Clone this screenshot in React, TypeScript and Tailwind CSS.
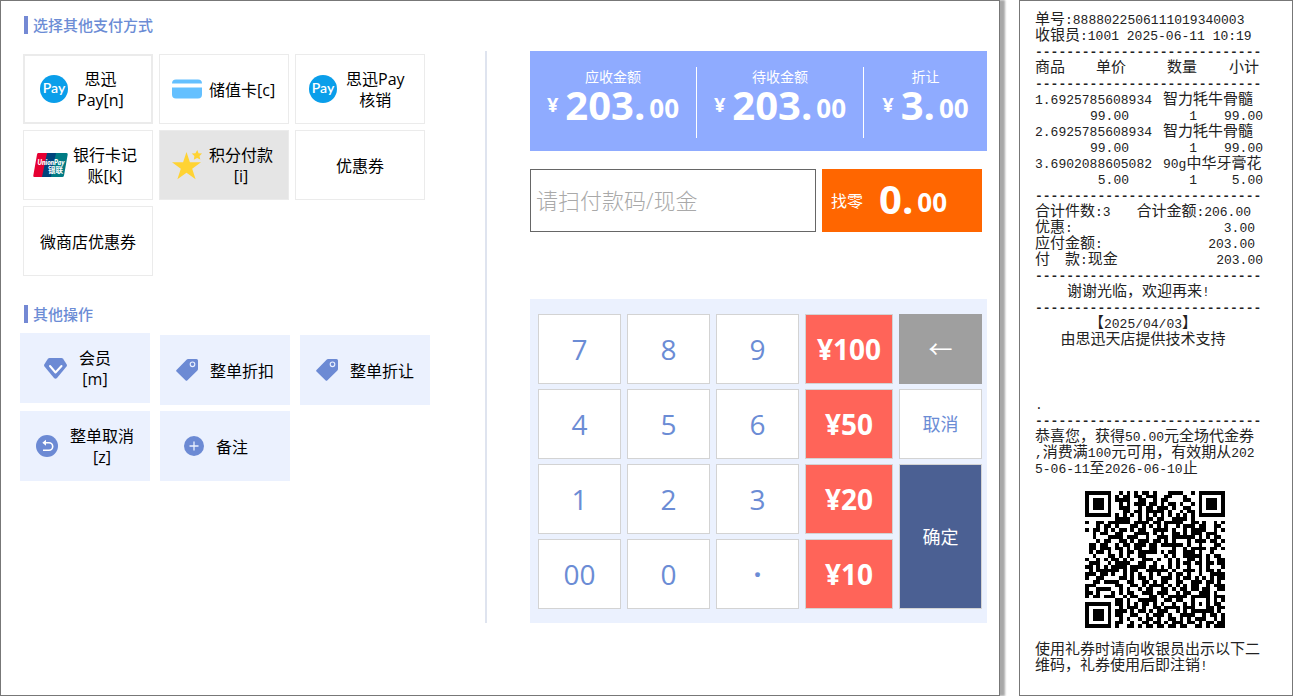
import React, { useState } from "react";

const QR_ROWS = [
  "#######..#.#.#.##.#...####..#.#######",
  "#.....#.#.##.##.###..##...#...#.....#",
  "#.###.#.####..##..#.##....##..#.###.#",
  "#.###.#..#.#.###.##.#.##.#..#.#.###.#",
  "#.###.#..###..#.##.###.#..##..#.###.#",
  "#.....#...##.##.#####.#..#.##.#.....#",
  "#######.#.#.#.#.#.#.#.#.#.#.#.#######",
  "........####..#.##.##..####.#........",
  "#..##.######.####.##.#####..##.#..#.#",
  "...#.##.#...##.#.#.#.#..#.###.##..##.",
  "#.##.#.#.##.#.##..####.#..#.####..#.#",
  "..#.##..##...####.#.#..##.#.###.###..",
  "..#...####.###..#..###.######.#.#.##.",
  "...#.##..##.#.###.##.#.#...#.###.##.#",
  ".##.##..#.##.###.##.######.#..#...##.",
  ".##.###.##.#.##..##....#..#.####.##.#",
  ".#.##.#..#.##.#####.#.##..###.#..#...",
  "..#...##.#.#..##.....#.#..#####.#.##.",
  "#..#.#.##.#.#..###.#..#.#..##.#.#..##",
  ".###..#.####..##..#...#.#.##.##.##.##",
  "##.#.#.####.####.##.#.#.#..#..#.#...#",
  ".#.######.#.##..######.#..###.#.##.#.",
  "###.##.#..#.#.#..#.#..#.##.#..#..####",
  "#..##....##.#.##.#..###.#.##.#.#.#.##",
  "..##.####..##..##.#.##..##..###.##.#.",
  "###.....##..##.#.####.#.#.#.##..#.###",
  "#..####..#.#..#.##..##.#.##.##.##..##",
  "##.#...#.#.##..###.###..#.##..###.#..",
  "#.##.###..#.##...##.#.#####.#####.###",
  "........##.#..#####..##.##..#...#.#.#",
  "#######.##.#.#.##.#.#..#..#.#.#.#.##.",
  "#.....#..#.###.#..##.####.###...##.##",
  "#.###.#.###.#.##.#.###..#.#.######.#.",
  "#.###.#.##..##..#.###.#..####..#.##.#",
  "#.###.#..#.#..#.##.#..##.#.#.###..#.#",
  "#.....#.##..#..##.##.#.###.##.#.##.##",
  "#######.#..##.#.##.##.##.##..##.#.###",
];

const QrCode = () => (
  <svg
    className="mx-auto h-[137px] w-[140px]"
    viewBox="0 0 37 37"
    preserveAspectRatio="none"
    shapeRendering="crispEdges"
    role="img"
    aria-label="二维码"
  >
    <path
      fill="#000"
      d={QR_ROWS.map((row, y) =>
        [...row].map((c, x) => (c === "#" ? `M${x} ${y}h1v1h-1z` : "")).join("")
      ).join("")}
    />
  </svg>
);

const PayIcon = () => (
  <svg className="size-7 shrink-0" viewBox="0 0 28 28" aria-hidden="true">
    <circle cx="14" cy="14" r="14" fill="#0a9eea" />
    <text x="14" y="18" textAnchor="middle" fill="#fff" fontFamily="Lato, sans-serif" fontWeight="600" fontSize="14">
      Pay
    </text>
  </svg>
);

const CardIcon = () => (
  <svg className="h-5 w-[30px] shrink-0" viewBox="0 0 30 20" aria-hidden="true">
    <path fill="#64c0ff" d="M4 .5h22a4 4 0 0 1 4 4H0a4 4 0 0 1 4-4zM0 8.500h30v7a4 4 0 0 1-4 4H4a4 4 0 0 1-4-4z" />
  </svg>
);

const UnionPayIcon = () => (
  <svg className="h-6 w-[35px] shrink-0" viewBox="0 0 35 24" aria-hidden="true">
    <path fill="#e60032" d="M5 0h10l-5 24H1.500Q0 24 .3 22.500L4 1.500Q4.300 0 5 0z" />
    <path fill="#00447c" d="M14 0h10l-5 24H9z" />
    <path fill="#007b84" d="M23 0h10.500q1.500 0 1.200 1.500L31 22.500q-.3 1.500-1.800 1.500H18z" />
    <text x="18" y="11.500" textAnchor="middle" fill="#fff" fontFamily="Lato, sans-serif" fontStyle="italic" fontWeight="800" fontSize="6.500">
      UnionPay
    </text>
    <text x="22.500" y="20" textAnchor="middle" fill="#fff" fontFamily="Noto Sans CJK SC, sans-serif" fontWeight="700" fontSize="7.500">
      银联
    </text>
  </svg>
);

const StarIcon = () => (
  <svg className="size-[30px] shrink-0" viewBox="0 0 30 30" aria-hidden="true">
    <path fill="#ffd333" d="M14.500 2l3.400 10.300H29l-8.800 6.500 3.400 10.400-9.100-6.400-9.100 6.400 3.400-10.400L0 12.300h11.100z" />
    <path fill="#ffd333" d="M25.300 0l1.200 3.300 3.500.3-2.500 2.300.8 3.700-3.200-1.700-3.300 1.800.6-3.600L19.700 3.400l3.700-.1z" />
  </svg>
);

const DiamondIcon = () => (
  <svg className="h-[21px] w-[23px] shrink-0" viewBox="0 0 23 21" aria-hidden="true">
    <path fill="#6c8ad4" d="M5.500 0h12q1 0 1.600.8l3.500 5.500q.7 1.200-.1 2.200L13 20q-1.500 1.600-3 0L.5 8.500q-.8-1-.1-2.200L3.900.8Q4.500 0 5.500 0z" />
    <path fill="none" stroke="#fff" strokeWidth="2" strokeLinecap="round" strokeLinejoin="round" d="M6 8l5.500 6.500L17.500 8" />
  </svg>
);

const TagIcon = () => (
  <svg className="size-[22px] shrink-0" viewBox="0 0 22 22" aria-hidden="true">
    <path fill="#6c8ad4" d="M12 0h8.500q1.500 0 1.500 1.500V10q0 .8-.6 1.400L11.200 21.500q-.8.7-1.500 0L.5 12.500q-.8-.7 0-1.500L10.800.5q.5-.5 1.200-.5z" />
    <circle cx="16.500" cy="5.300" r="2.300" fill="none" stroke="#ebf1fe" strokeWidth="1.100" />
  </svg>
);

const UndoIcon = () => (
  <svg className="size-[22px] shrink-0" viewBox="0 0 22 22" aria-hidden="true">
    <circle cx="11" cy="11" r="11" fill="#6c8ad4" />
    <path fill="none" stroke="#fff" strokeWidth="1.600" d="M8 7.800h5a3.700 3.700 0 0 1 0 7.400H7" />
    <path fill="#fff" d="M6.300 7.800L10 4.800v6z" />
  </svg>
);

const PlusIcon = () => (
  <svg className="size-5 shrink-0" viewBox="0 0 20 20" aria-hidden="true">
    <circle cx="10" cy="10" r="10" fill="#6c8ad4" />
    <path stroke="#ebf1fe" strokeWidth="1.300" d="M5.500 10h9M10 5.500v9" />
  </svg>
);

type Tile = { lines: string[]; icon?: React.ReactNode; layout: string };

const payMethods: Tile[] = [
  { lines: ["思迅", "Pay[n]"], icon: <PayIcon />, layout: "border-2 border-[#ebebeb] pl-[15px] gap-[9px]" },
  { lines: ["储值卡[c]"], icon: <CardIcon />, layout: "border border-[#ebebeb] pl-3 gap-[7px]" },
  { lines: ["思迅Pay", "核销"], icon: <PayIcon />, layout: "border border-[#ebebeb] pl-[13px] gap-[9px]" },
  { lines: ["银行卡记", "账[k]"], icon: <UnionPayIcon />, layout: "border border-[#ebebeb] pl-[9px] gap-[5px]" },
  { lines: ["积分付款", "[i]"], icon: <StarIcon />, layout: "border border-[#ebebeb] bg-[#e5e5e5] pl-3 gap-[7px]" },
  { lines: ["优惠券"], layout: "border border-[#ebebeb] justify-center" },
  { lines: ["微商店优惠券"], layout: "border border-[#ebebeb] justify-center" },
];

const operations: Tile[] = [
  { lines: ["会员", "[m]"], icon: <DiamondIcon />, layout: "self-start pl-6" },
  { lines: ["整单折扣"], icon: <TagIcon />, layout: "self-end pl-4" },
  { lines: ["整单折让"], icon: <TagIcon />, layout: "self-end pl-4" },
  { lines: ["整单取消", "[z]"], icon: <UndoIcon />, layout: "pl-4" },
  { lines: ["备注"], icon: <PlusIcon />, layout: "pl-6" },
];

const Label = ({ lines }: { lines: string[] }) => (
  <span className="pt-0.5 text-center text-base leading-[21px] whitespace-nowrap text-black">
    {lines.map((l) => (
      <span key={l} className="block">
        {l}
      </span>
    ))}
  </span>
);

const Heading = ({ children }: { children: React.ReactNode }) => (
  <h2 className="ml-[23px] flex h-[18px] items-center border-l-4 border-[#7489d4] pl-[5px] text-[15px] leading-[18px] font-medium text-[#6b8cd5]">
    {children}
  </h2>
);

const Amount = ({ whole }: { whole: string }) => (
  <>
    <span className="text-[40px]">{whole}</span>
    <span className="ml-1 align-[2px] text-[26px]">00</span>
  </>
);

const Total = ({ label, whole }: { label: string; whole: string }) => (
  <div className="text-center whitespace-nowrap">
    <div className="text-sm leading-5">{label}</div>
    <div className="leading-[36px] font-bold">
      <span className="mr-[7px] align-[8px] text-xl leading-5">¥</span>
      <Amount whole={whole} />
    </div>
  </div>
);

const keyBase = "flex items-center justify-center border border-[#d3d3d3]";

const DigitKey = ({ value, onPress }: { value: string; onPress: (v: string) => void }) => (
  <button className={`${keyBase} bg-white text-[28px] text-[#6b8cd5]`} onClick={() => onPress(value)}>
    {value === "." ? <span className="font-bold">·</span> : value}
  </button>
);

const CashKey = ({ value, onPress }: { value: string; onPress: (v: string) => void }) => (
  <button className={`${keyBase} bg-[#ff6459] text-[28px] font-bold text-white`} onClick={() => onPress(value)}>
    ¥{value}
  </button>
);

/* Printer text: full-width characters are set one size above the half-width ones. */
const Print = ({ children }: { children: string }) => (
  <>
    {children.split(/([^\x00-\xff]+)/).map((part, i) =>
      i % 2 ? (
        <span key={i} className="text-[15px]">
          {part}
        </span>
      ) : (
        part
      )
    )}
  </>
);

const Rule = () => (
  <div className="h-4 font-bold" aria-hidden="true">
    -----------------------------
  </div>
);

const items = [
  { code: "1.6925785608934", name: "智力牦牛骨髓", price: "99.00", qty: "1", sum: "99.00" },
  { code: "2.6925785608934", name: "智力牦牛骨髓", price: "99.00", qty: "1", sum: "99.00" },
  { code: "3.6902088605082", name: "90g中华牙膏花", price: "5.00", qty: "1", sum: "5.00" },
];

const Row = ({ label, value, pad }: { label: string; value: string; pad: string }) => (
  <div className={`flex h-4 justify-between ${pad}`}>
    <span>
      <Print>{label}</Print>
    </span>
    <span>
      <Print>{value}</Print>
    </span>
  </div>
);

const Receipt = () => (
  <aside className="w-[274px] shrink-0 border border-[#777] bg-white pt-3 pl-[15px] font-['Liberation_Mono','Noto_Sans_CJK_SC',monospace] text-[13px] leading-4 text-[#222]">
    <div className="w-[228px] whitespace-pre">
      <div className="h-4"><Print>单号:8888022506111019340003</Print></div>
      <div className="h-4"><Print>收银员:1001 2025-06-11 10:19</Print></div>
      <Rule />
      <table className="w-full table-fixed border-collapse">
        <colgroup>
          <col className="w-[61px]" />
          <col className="w-[33px]" />
          <col className="w-[34px]" />
          <col className="w-[34px]" />
          <col />
        </colgroup>
        <thead>
          <tr className="h-4 text-left">
            <th className="p-0 font-normal"><Print>商品</Print></th>
            <th className="p-0 font-normal"><Print>单价</Print></th>
            <th className="p-0 text-right font-normal" colSpan={2}><Print>数量</Print></th>
            <th className="p-0 pr-1 text-right font-normal"><Print>小计</Print></th>
          </tr>
          <tr>
            <td className="p-0" colSpan={5}><Rule /></td>
          </tr>
        </thead>
        {items.map((it) => (
          <tbody key={it.code}>
            <tr>
              <td className="h-4 p-0" colSpan={3}>{it.code}</td>
              <td className="p-0" colSpan={2}>
                <div className="h-4"><Print>{it.name}</Print></div>
              </td>
            </tr>
            <tr className="h-4 text-right">
              <td className="p-0" />
              <td className="p-0">
                <div className="flex justify-end">{it.price}</div>
              </td>
              <td className="p-0" colSpan={2}>{it.qty}</td>
              <td className="p-0">{it.sum}</td>
            </tr>
          </tbody>
        ))}
      </table>
      <Rule />
      <Row label="合计件数:3" value="合计金额:206.00" pad="pr-3" />
      <Row label="优惠:" value="3.00" pad="pr-2" />
      <Row label="应付金额:" value="203.00" pad="pr-2" />
      <Row label={"付\u3000款:现金"} value="203.00" pad="pr-0" />
      <Rule />
      <div className="h-4 pl-8"><Print>谢谢光临，欢迎再来!</Print></div>
      <Rule />
      <div className="flex h-4 justify-center pr-3"><span><Print>【2025/04/03】</Print></span></div>
      <div className="flex h-4 justify-center pr-3"><span><Print>由思迅天店提供技术支持</Print></span></div>
      <div className="mt-[49px] h-4">.</div>
      <Rule />
      <div className="h-4"><Print>恭喜您，获得50.00元全场代金券</Print></div>
      <div className="h-4"><Print>,消费满100元可用，有效期从202</Print></div>
      <div className="h-4"><Print>5-06-11至2026-06-10止</Print></div>
      <div className="mt-[13px] pl-[11px]">
        <QrCode />
      </div>
      <div className="mt-[15px] h-4"><Print>使用礼券时请向收银员出示以下二</Print></div>
      <div className="h-4"><Print>维码，礼券使用后即注销!</Print></div>
    </div>
  </aside>
);

export default function App() {
  const [paid, setPaid] = useState("");
  const press = (v: string) => setPaid((p) => p + v);
  const cash = (v: string) => setPaid(v);

  return (
    <div className="flex min-h-screen bg-white font-['Open_Sans','Noto_Sans_CJK_SC',sans-serif]">
      <main className="mr-[19px] flex min-w-0 flex-1 border border-[#777] bg-white shadow-[5px_0_2px_#a8a8a8]">
        <section className="w-[484px] shrink-0 pt-[15px]">
          <Heading>选择其他支付方式</Heading>
          <div className="mt-5 ml-[22px] grid auto-rows-[70px] grid-cols-[repeat(3,130px)] gap-[6px]">
            {payMethods.map((t) => (
              <button key={t.lines.join("")} className={`flex items-center ${t.layout}`}>
                {t.icon}
                <Label lines={t.lines} />
              </button>
            ))}
          </div>
          <div className="mt-[29px]">
            <Heading>其他操作</Heading>
          </div>
          <div className="mt-[10px] ml-[19px] grid grid-cols-[repeat(3,130px)] grid-rows-[72px_70px] gap-x-[10px] gap-y-[6px]">
            {operations.map((t) => (
              <button key={t.lines.join("")} className={`flex h-[70px] items-center gap-3 bg-[#ebf1fe] ${t.layout}`}>
                {t.icon}
                <Label lines={t.lines} />
              </button>
            ))}
          </div>
        </section>

        <section className="mt-[50px] mr-3 h-[572px] min-w-0 flex-1 border-l-2 border-[#dfe4ef] pl-[43px]">
          <div className="grid h-[100px] grid-cols-[167fr_167fr_123fr] divide-x divide-white bg-[#8fabff] pt-4 pb-[13px] text-white">
            <Total label="应收金额" whole="203." />
            <Total label="待收金额" whole="203." />
            <Total label="折让" whole="3." />
          </div>

          <div className="mt-[18px] mr-[5px] flex h-[63px] gap-[6px]">
            <input
              aria-label="付款码或现金"
              className="w-0 min-w-0 flex-1 border border-[#666] px-[5px] text-[22px] font-light text-[#333] outline-none placeholder:text-[#a9a9a9]"
              placeholder="请扫付款码/现金"
              value={paid}
              onChange={(e) => setPaid(e.target.value)}
            />
            <div className="flex w-40 items-center bg-[#ff6600] pl-[9px] whitespace-nowrap text-white">
              <span className="text-base">找零</span>
              <span className="ml-4 pt-1.5 leading-[60px] font-bold">
                <Amount whole="0." />
              </span>
            </div>
          </div>

          <div className="mt-[67px] grid h-[324px] grid-cols-[83fr_83fr_83fr_88fr_83fr] grid-rows-[repeat(4,70px)] gap-x-[6px] gap-y-[5px] bg-[#ebf1fe] pt-[15px] pr-[5px] pl-2">
            <DigitKey value="7" onPress={press} />
            <DigitKey value="8" onPress={press} />
            <DigitKey value="9" onPress={press} />
            <CashKey value="100" onPress={cash} />
            <button
              aria-label="退格"
              className="flex items-center justify-center bg-[#9f9f9f] text-2xl text-white"
              onClick={() => setPaid((p) => p.slice(0, -1))}
            >
              ←
            </button>
            <DigitKey value="4" onPress={press} />
            <DigitKey value="5" onPress={press} />
            <DigitKey value="6" onPress={press} />
            <CashKey value="50" onPress={cash} />
            <button className={`${keyBase} bg-white text-lg text-[#6b8cd5]`} onClick={() => setPaid("")}>
              取消
            </button>
            <DigitKey value="1" onPress={press} />
            <DigitKey value="2" onPress={press} />
            <DigitKey value="3" onPress={press} />
            <CashKey value="20" onPress={cash} />
            <button className={`${keyBase} row-span-2 bg-[#4b6093] text-lg text-white`}>确定</button>
            <DigitKey value="00" onPress={press} />
            <DigitKey value="0" onPress={press} />
            <DigitKey value="." onPress={press} />
            <CashKey value="10" onPress={cash} />
          </div>
        </section>
      </main>
      <Receipt />
    </div>
  );
}
